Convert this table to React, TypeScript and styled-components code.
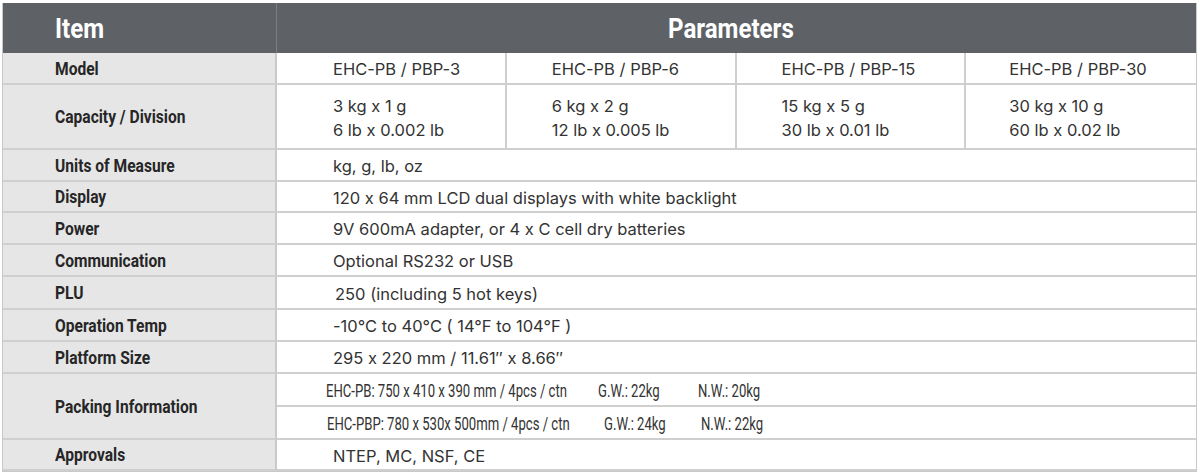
import React from "react";
import styled, { createGlobalStyle } from "styled-components";

const GlobalStyle = createGlobalStyle`
  body {
    margin: 0;
    background: #ffffff;
    font-family: Inter, Roboto, "Liberation Sans", sans-serif;
    font-feature-settings: "calt" 0;
  }
`;

const Page = styled.div`
  padding: 3px 4px 0 2px;
`;

const Table = styled.div`
  display: grid;
  grid-template-columns: 274px repeat(4, 1fr);
  border: 1px solid #c9c9c9;
  border-top: none;
  width: 1193px;
`;

// condensed look: the page has no condensed family, so squeeze horizontally
const Squeeze = styled.span<{ $sx: number }>`
  display: inline-block;
  white-space: nowrap;
  transform: scaleX(${(p) => p.$sx});
  transform-origin: left center;
`;

const HeadCell = styled.div<{ $center?: boolean; $span?: number }>`
  grid-column: span ${(p) => p.$span ?? 1};
  background: #5e6267;
  color: #ffffff;
  height: 50px;
  display: flex;
  align-items: center;
  padding-left: ${(p) => (p.$center ? "391px" : "52px")};
  font-family: Roboto, "Liberation Sans", sans-serif;
  font-weight: 700;
  font-size: 28px;
  border-right: 1px solid ${(p) => (p.$center ? "transparent" : "#7a7e83")};
`;

const Label = styled.div<{ $h: number; $rows?: number }>`
  grid-row: span ${(p) => p.$rows ?? 1};
  background: #e6e6e6;
  height: ${(p) => p.$h}px;
  display: flex;
  align-items: center;
  padding-left: 52px;
  color: #262626;
  font-family: Roboto, "Liberation Sans", sans-serif;
  font-weight: 700;
  font-size: 19px;
  border-right: 2px solid #c9c9c9;
  border-bottom: 2px solid #cfcfcf;
  box-sizing: border-box;
`;

const Cell = styled.div<{ $h: number; $span?: number; $pad?: number; $last?: boolean }>`
  grid-column: span ${(p) => p.$span ?? 1};
  height: ${(p) => p.$h}px;
  box-sizing: border-box;
  display: flex;
  flex-direction: column;
  justify-content: center;
  padding-left: ${(p) => p.$pad ?? 56}px;
  padding-top: 2px;
  color: #333333;
  font-size: 16.5px;
  line-height: 24px;
  border-bottom: 2px solid #cfcfcf;
  border-right: ${(p) => (p.$last ? "none" : "2px solid #cfcfcf")};
`;

const PackLine = styled.div<{ $pad: number }>`
  grid-column: span 4;
  height: 33px;
  box-sizing: border-box;
  border-bottom: 2px solid #cfcfcf;
  display: flex;
  align-items: center;
  padding-left: ${(p) => p.$pad}px;
  padding-top: 2px;
  color: #333333;
  font-family: Roboto, "Liberation Sans", sans-serif;
  font-size: 19px;
`;

const PackPart = styled.span<{ $w: number }>`
  display: inline-block;
  width: ${(p) => p.$w}px;
  white-space: nowrap;
`;

const models = ["EHC-PB / PBP-3", "EHC-PB / PBP-6", "EHC-PB / PBP-15", "EHC-PB / PBP-30"];
const capacity = [
  ["3 kg x 1 g", "6 lb x 0.002 lb"],
  ["6 kg x 2 g", "12 lb x 0.005 lb"],
  ["15 kg x 5 g", "30 lb x 0.01 lb"],
  ["30 kg x 10 g", "60 lb x 0.02 lb"],
];
const pads = [56, 45, 45, 43];

const simpleRows: { label: string; value: string; h: number; pad?: number }[] = [
  { label: "Units of Measure", value: "kg, g, lb, oz", h: 32 },
  { label: "Display", value: "120 x 64 mm LCD dual displays with white backlight", h: 31 },
  { label: "Power", value: "9V 600mA adapter, or 4 x C cell dry batteries", h: 32 },
  { label: "Communication", value: "Optional RS232 or USB", h: 32 },
  { label: "PLU", value: "250 (including 5 hot keys)", h: 33, pad: 58 },
  { label: "Operation Temp", value: "-10°C to 40°C ( 14°F to 104°F )", h: 32 },
  { label: "Platform Size", value: "295 x 220 mm / 11.61″ x 8.66″", h: 32 },
];

const LabelText = ({ children }: { children: React.ReactNode }) => (
  <Squeeze $sx={0.82}>{children}</Squeeze>
);

const PackText = ({ children }: { children: React.ReactNode }) => (
  <Squeeze $sx={0.69}>{children}</Squeeze>
);

export default function App() {
  return (
    <Page>
      <GlobalStyle />
      <Table>
        <HeadCell>
          <Squeeze $sx={0.86}>Item</Squeeze>
        </HeadCell>
        <HeadCell $center $span={4}>
          <Squeeze $sx={0.86}>Parameters</Squeeze>
        </HeadCell>

        <Label $h={32}><LabelText>Model</LabelText></Label>
        {models.map((m, i) => (
          <Cell key={m} $h={32} $pad={pads[i]} $last={i === 3}>{m}</Cell>
        ))}

        <Label $h={65}><LabelText>Capacity / Division</LabelText></Label>
        {capacity.map((c, i) => (
          <Cell key={c[0]} $h={65} $pad={pads[i]} $last={i === 3}>
            <span>{c[0]}</span>
            <span>{c[1]}</span>
          </Cell>
        ))}

        {simpleRows.map((r) => (
          <React.Fragment key={r.label}>
            <Label $h={r.h}><LabelText>{r.label}</LabelText></Label>
            <Cell $h={r.h} $span={4} $pad={r.pad} $last>{r.value}</Cell>
          </React.Fragment>
        ))}

        <Label $h={66} $rows={2}><LabelText>Packing Information</LabelText></Label>
        <PackLine $pad={49}>
          <PackPart $w={272}><PackText>EHC-PB: 750 x 410 x 390 mm / 4pcs / ctn</PackText></PackPart>
          <PackPart $w={100}><PackText>G.W.: 22kg</PackText></PackPart>
          <PackPart $w={100}><PackText>N.W.: 20kg</PackText></PackPart>
        </PackLine>
        <PackLine $pad={50}>
          <PackPart $w={277}><PackText>EHC-PBP: 780 x 530x 500mm / 4pcs / ctn</PackText></PackPart>
          <PackPart $w={97}><PackText>G.W.: 24kg</PackText></PackPart>
          <PackPart $w={100}><PackText>N.W.: 22kg</PackText></PackPart>
        </PackLine>

        <Label $h={31}><LabelText>Approvals</LabelText></Label>
        <Cell $h={31} $span={4} $last>NTEP, MC, NSF, CE</Cell>
      </Table>
    </Page>
  );
}
